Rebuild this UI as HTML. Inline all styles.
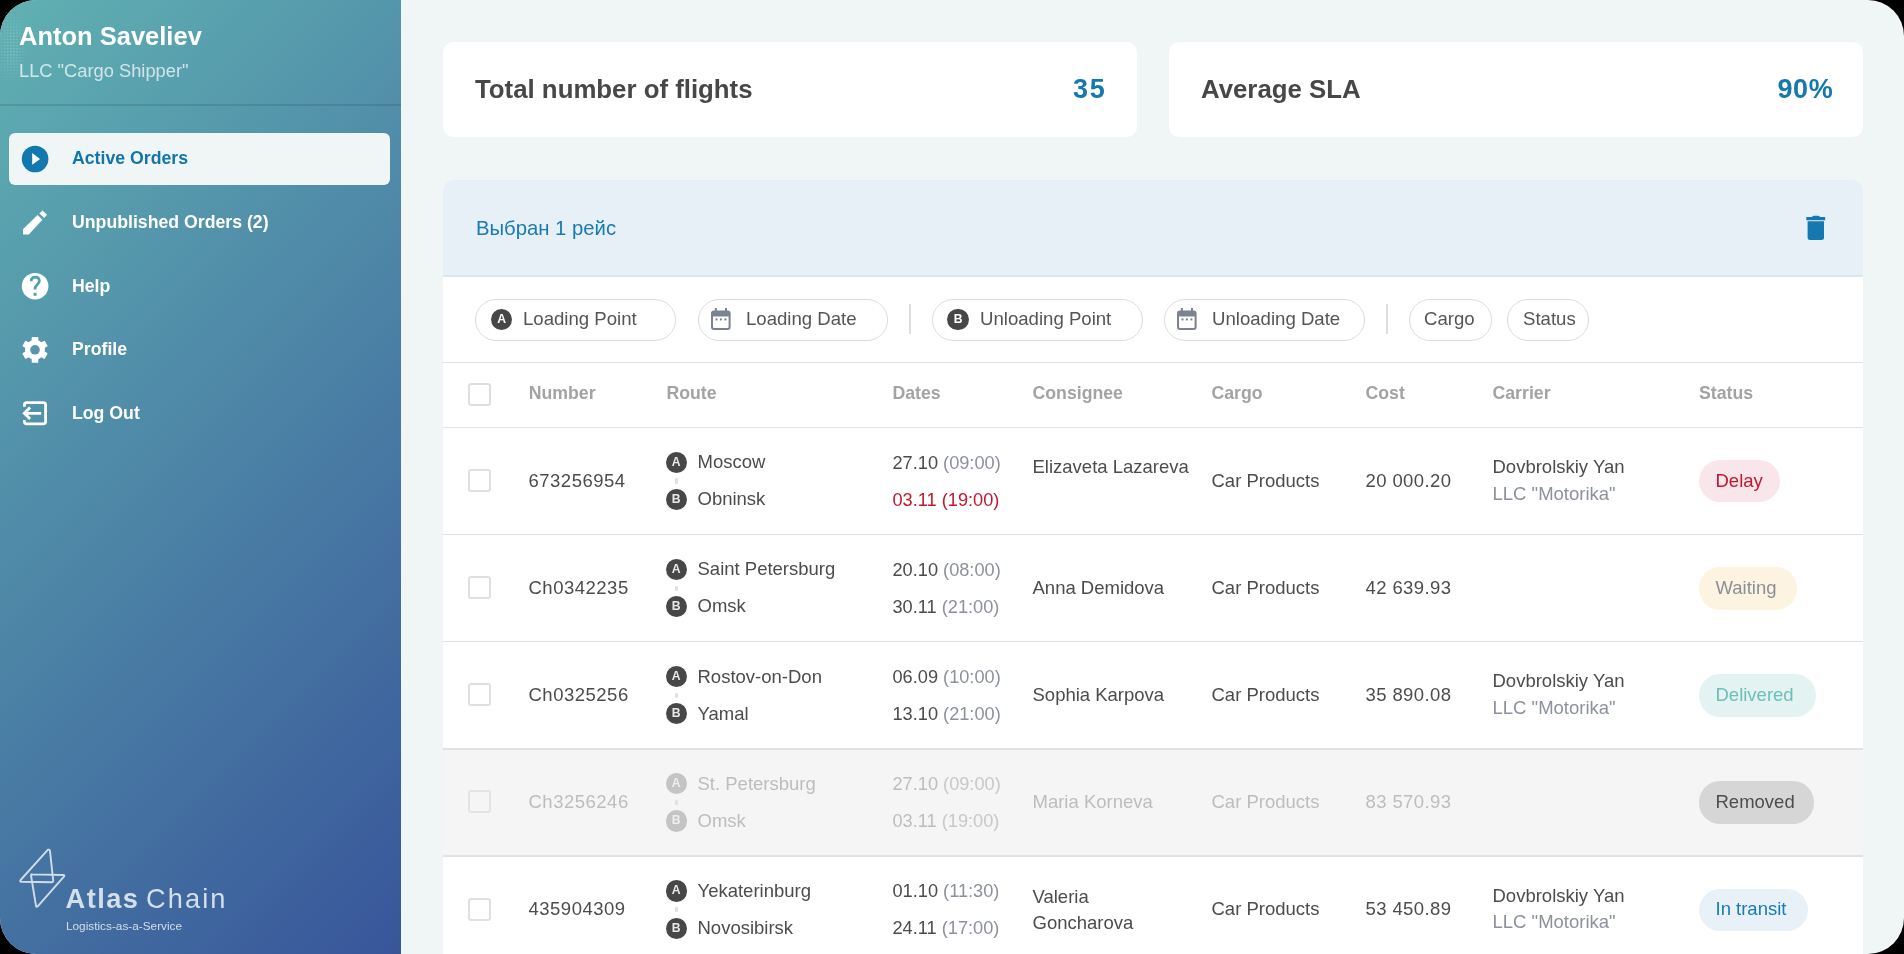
<!DOCTYPE html>
<html><head><meta charset="utf-8"><style>
*{box-sizing:border-box;margin:0;padding:0}
html,body{width:1904px;height:954px;overflow:hidden;background:#000;font-family:"Liberation Sans",sans-serif}
#frame{position:absolute;left:0;top:0;width:1904px;height:954px;border-radius:36px;overflow:hidden;background:#f0f5f5;will-change:transform}
.t{position:absolute;white-space:nowrap}
.r{position:absolute}
svg{position:absolute;overflow:visible}
</style></head><body><div id="frame">
<div class="r" style="left:0px;top:0px;width:401px;height:954px;background:linear-gradient(135deg,#60b1b2 0%,#38559a 100%)"></div>
<div class="r" style="left:0px;top:10px;width:40px;height:90px;background-image:radial-gradient(circle,rgba(170,225,220,0.40) 0.6px,transparent 1px);background-size:3.1px 3.1px;-webkit-mask-image:radial-gradient(ellipse 17px 40px at 11px 36px,#000 20%,transparent 100%);mask-image:radial-gradient(ellipse 17px 40px at 11px 36px,#000 20%,transparent 100%)"></div>
<div class="t" style="left:19.0px;top:24.1px;font-size:25.5px;line-height:25.5px;color:#fff;font-weight:700">Anton Saveliev</div>
<div class="t" style="left:19.0px;top:62.1px;font-size:18.3px;line-height:18.3px;color:rgba(255,255,255,0.72)">LLC "Cargo Shipper"</div>
<div class="r" style="left:0px;top:104.2px;width:401px;height:1.5px;background:rgba(30,60,75,0.17)"></div>
<div class="r" style="left:9px;top:133px;width:381px;height:52px;background:#f0f5f5;border-radius:6px"></div>
<div class="t" style="left:72.0px;top:149.9px;font-size:17.7px;line-height:17.7px;color:#1175ae;font-weight:700">Active Orders</div>
<div class="t" style="left:72.0px;top:214.0px;font-size:17.7px;line-height:17.7px;color:#fff;font-weight:700">Unpublished Orders (2)</div>
<div class="t" style="left:72.0px;top:277.6px;font-size:17.7px;line-height:17.7px;color:#fff;font-weight:700">Help</div>
<div class="t" style="left:72.0px;top:341.2px;font-size:17.7px;line-height:17.7px;color:#fff;font-weight:700">Profile</div>
<div class="t" style="left:72.0px;top:404.8px;font-size:17.7px;line-height:17.7px;color:#fff;font-weight:700">Log Out</div>
<svg style="left:0;top:0" width="401" height="954" viewBox="0 0 401 954"><circle cx="35.1" cy="159" r="13.3" fill="#1179b0"/><path d="M32.2 153.1 L40.1 158.9 L32.2 164.7 Z" fill="#fff"/><path d="M23 229.3 L37.5 215 L42.4 219.8 L28.8 234.6 L23 234.6 Z" fill="#fff"/><path d="M42.6 210.4 L47 214.8 L44.2 218 L39.4 213.4 Z" fill="#fff"/><circle cx="35.1" cy="286.2" r="13.3" fill="#fff"/><path d="M31.2 281.3 C31.2 278.6 33 277.2 35.3 277.2 C37.7 277.2 39.3 278.8 39.3 281 C39.3 283.6 36.3 284.6 35.1 287.8 L35.1 289.5" fill="none" stroke="#559fb0" stroke-width="2.8"/><rect x="33.6" y="292.8" width="3" height="3" fill="#559fb0"/><g transform="translate(35,349.8)"><mask id="gmask"><rect x="-20" y="-20" width="40" height="40" fill="#fff"/><circle r="4.8" fill="#000"/></mask><g mask="url(#gmask)" fill="#fff"><circle r="10.0"/><rect x="-3.3" y="-12.9" width="6.6" height="12.9" rx="0.8" transform="rotate(0)"/><rect x="-3.3" y="-12.9" width="6.6" height="12.9" rx="0.8" transform="rotate(60)"/><rect x="-3.3" y="-12.9" width="6.6" height="12.9" rx="0.8" transform="rotate(120)"/><rect x="-3.3" y="-12.9" width="6.6" height="12.9" rx="0.8" transform="rotate(180)"/><rect x="-3.3" y="-12.9" width="6.6" height="12.9" rx="0.8" transform="rotate(240)"/><rect x="-3.3" y="-12.9" width="6.6" height="12.9" rx="0.8" transform="rotate(300)"/></g></g><path d="M24.4 406.8 V405 Q24.4 402.7 26.7 402.7 H43.3 Q45.6 402.7 45.6 405 V421.6 Q45.6 423.9 43.3 423.9 H26.7 Q24.4 423.9 24.4 421.6 V420" fill="none" stroke="#fff" stroke-width="2.8" stroke-linejoin="round"/><path d="M41.2 413.3 H24.5 M30.1 407.5 L24.3 413.3 L30.1 419.1" fill="none" stroke="#fff" stroke-width="2.8"/></svg>
<div class="r" style="left:443px;top:42px;width:694px;height:95px;background:#fff;border-radius:10px"></div>
<div class="r" style="left:1169px;top:42px;width:694px;height:95px;background:#fff;border-radius:10px"></div>
<div class="t" style="left:475.0px;top:77.2px;font-size:25.8px;line-height:25.8px;color:#474747;font-weight:700">Total number of flights</div>
<div class="t" style="left:1073.0px;top:76.4px;font-size:27px;line-height:27px;color:#1479b0;font-weight:700;letter-spacing:1.8px">35</div>
<div class="t" style="left:1201.0px;top:77.2px;font-size:25.8px;line-height:25.8px;color:#474747;font-weight:700">Average SLA</div>
<div class="t" style="left:1777.5px;top:76.4px;font-size:27px;line-height:27px;color:#1479b0;font-weight:700;letter-spacing:0.6px">90%</div>
<div class="r" style="left:443px;top:180px;width:1420px;height:800px;background:#fff;border-radius:10px 10px 0 0"></div>
<div class="r" style="left:443px;top:180px;width:1420px;height:96px;background:#e8f0f7;border-radius:10px 10px 0 0"></div>
<div class="r" style="left:443px;top:275px;width:1420px;height:1.5px;background:#dfe5ea"></div>
<div class="t" style="left:476.0px;top:218.1px;font-size:20.3px;line-height:20.3px;color:#1a7ab2">Выбран 1 рейс</div>
<svg style="left:0;top:0" width="1904" height="954"><path d="M1812 217 Q1812.5 215.8 1814 215.8 H1818 Q1819.5 215.8 1820 217 H1825.2 V220.2 H1806.3 V217 Z" fill="#1479b0"/><path d="M1807.6 221.3 H1824 V237.5 Q1824 240 1821.5 240 H1810.1 Q1807.6 240 1807.6 237.5 Z" fill="#1479b0"/></svg>
<div class="r" style="left:475px;top:298.5px;width:201px;height:42px;border:1.5px solid #dcdcdc;border-radius:21px;background:#fff"></div>
<div class="r" style="left:698px;top:298.5px;width:190px;height:42px;border:1.5px solid #dcdcdc;border-radius:21px;background:#fff"></div>
<div class="r" style="left:932px;top:298.5px;width:211px;height:42px;border:1.5px solid #dcdcdc;border-radius:21px;background:#fff"></div>
<div class="r" style="left:1164px;top:298.5px;width:201px;height:42px;border:1.5px solid #dcdcdc;border-radius:21px;background:#fff"></div>
<div class="r" style="left:1409px;top:298.5px;width:83px;height:42px;border:1.5px solid #dcdcdc;border-radius:21px;background:#fff"></div>
<div class="r" style="left:1507px;top:298.5px;width:82px;height:42px;border:1.5px solid #dcdcdc;border-radius:21px;background:#fff"></div>
<div class="r" style="left:909px;top:304px;width:1.5px;height:30px;background:#dedede"></div>
<div class="r" style="left:1386px;top:304px;width:1.5px;height:30px;background:#dedede"></div>
<div class="r" style="left:490.9px;top:308.7px;width:21.3px;height:21.3px;border-radius:50%;background:#474747;color:#fff;font-size:12.2px;font-weight:700;text-align:center;line-height:21.900000000000002px">A</div>
<div class="r" style="left:947.4px;top:308.7px;width:21.3px;height:21.3px;border-radius:50%;background:#474747;color:#fff;font-size:12.2px;font-weight:700;text-align:center;line-height:21.900000000000002px">B</div>
<div class="t" style="left:523.0px;top:310.4px;font-size:18.6px;line-height:18.6px;color:#555">Loading Point</div>
<div class="t" style="left:746.0px;top:310.4px;font-size:18.6px;line-height:18.6px;color:#555">Loading Date</div>
<div class="t" style="left:980.0px;top:310.4px;font-size:18.6px;line-height:18.6px;color:#555">Unloading Point</div>
<div class="t" style="left:1212.0px;top:310.4px;font-size:18.6px;line-height:18.6px;color:#555">Unloading Date</div>
<div class="t" style="left:1424.0px;top:310.4px;font-size:18.6px;line-height:18.6px;color:#555">Cargo</div>
<div class="t" style="left:1523.0px;top:310.4px;font-size:18.6px;line-height:18.6px;color:#555">Status</div>
<svg style="left:711px;top:308px" width="20" height="23" viewBox="0 0 20 23"><rect x="1" y="3.5" width="17.6" height="17.6" rx="2" fill="none" stroke="#7b8290" stroke-width="2"/><rect x="0.5" y="3" width="18.6" height="5.5" rx="2" fill="#7b8290"/><rect x="3.8" y="0" width="2" height="4" fill="#7b8290"/><rect x="14" y="0" width="2" height="4" fill="#7b8290"/><rect x="4.5" y="10.4" width="2" height="2" fill="#7b8290"/><rect x="8.9" y="10.4" width="2" height="2" fill="#7b8290"/><rect x="13.4" y="10.4" width="2" height="2" fill="#7b8290"/></svg>
<svg style="left:1177px;top:308px" width="20" height="23" viewBox="0 0 20 23"><rect x="1" y="3.5" width="17.6" height="17.6" rx="2" fill="none" stroke="#7b8290" stroke-width="2"/><rect x="0.5" y="3" width="18.6" height="5.5" rx="2" fill="#7b8290"/><rect x="3.8" y="0" width="2" height="4" fill="#7b8290"/><rect x="14" y="0" width="2" height="4" fill="#7b8290"/><rect x="4.5" y="10.4" width="2" height="2" fill="#7b8290"/><rect x="8.9" y="10.4" width="2" height="2" fill="#7b8290"/><rect x="13.4" y="10.4" width="2" height="2" fill="#7b8290"/></svg>
<div class="r" style="left:443px;top:361.5px;width:1420px;height:1.5px;background:#e2e2e2"></div>
<div class="r" style="left:443px;top:426.5px;width:1420px;height:1.5px;background:#e2e2e2"></div>
<div class="r" style="left:468.4px;top:383px;width:23px;height:23px;border:2px solid #dedede;border-radius:3px;background:#fff"></div>
<div class="t" style="left:528.7px;top:384.8px;font-size:17.7px;line-height:17.7px;color:#a3a3a3;font-weight:700">Number</div>
<div class="t" style="left:666.4px;top:384.8px;font-size:17.7px;line-height:17.7px;color:#a3a3a3;font-weight:700">Route</div>
<div class="t" style="left:892.5px;top:384.8px;font-size:17.7px;line-height:17.7px;color:#a3a3a3;font-weight:700">Dates</div>
<div class="t" style="left:1032.5px;top:384.8px;font-size:17.7px;line-height:17.7px;color:#a3a3a3;font-weight:700">Consignee</div>
<div class="t" style="left:1211.5px;top:384.8px;font-size:17.7px;line-height:17.7px;color:#a3a3a3;font-weight:700">Cargo</div>
<div class="t" style="left:1365.5px;top:384.8px;font-size:17.7px;line-height:17.7px;color:#a3a3a3;font-weight:700">Cost</div>
<div class="t" style="left:1492.5px;top:384.8px;font-size:17.7px;line-height:17.7px;color:#a3a3a3;font-weight:700">Carrier</div>
<div class="t" style="left:1699.0px;top:384.8px;font-size:17.7px;line-height:17.7px;color:#a3a3a3;font-weight:700">Status</div>
<div class="r" style="left:468.4px;top:468.9px;width:23px;height:23px;border:2px solid #e0e0e0;border-radius:3px;background:#fff"></div>
<div class="t" style="left:528.5px;top:471.5px;font-size:18.5px;line-height:18.5px;color:#4c4c4c;letter-spacing:0.5px">673256954</div>
<div class="r" style="left:665.6px;top:451.8px;width:21.3px;height:21.3px;border-radius:50%;background:#474747;color:#e8e8e8;font-size:12.2px;font-weight:700;text-align:center;line-height:21.900000000000002px">A</div>
<div class="r" style="left:665.6px;top:488.9px;width:21.3px;height:21.3px;border-radius:50%;background:#474747;color:#e8e8e8;font-size:12.2px;font-weight:700;text-align:center;line-height:21.900000000000002px">B</div>
<div class="r" style="left:675px;top:478.3px;width:2.6px;height:5.5px;background:#e0e0e0;border-radius:1.3px"></div>
<div class="t" style="left:697.5px;top:453.2px;font-size:18.5px;line-height:18.5px;color:#4c4c4c">Moscow</div>
<div class="t" style="left:697.5px;top:490.2px;font-size:18.5px;line-height:18.5px;color:#4c4c4c">Obninsk</div>
<div class="t" style="left:892.5px;top:453.5px;font-size:18.2px;line-height:18.2px;color:#4c4c4c">27.10 <span style="color:#8c919c">(09:00)</span></div>
<div class="t" style="left:892.5px;top:490.5px;font-size:18.2px;line-height:18.2px;color:#c0182f">03.11 <span style="color:#c0182f">(19:00)</span></div>
<div class="t" style="left:1032.5px;top:458.1px;font-size:18.5px;line-height:18.5px;color:#4c4c4c">Elizaveta Lazareva</div>
<div class="t" style="left:1211.5px;top:471.5px;font-size:18.5px;line-height:18.5px;color:#4c4c4c">Car Products</div>
<div class="t" style="left:1365.5px;top:471.5px;font-size:18.5px;line-height:18.5px;color:#4c4c4c;letter-spacing:0.4px">20 000.20</div>
<div class="t" style="left:1492.5px;top:458.1px;font-size:18.5px;line-height:18.5px;color:#4c4c4c">Dovbrolskiy Yan</div>
<div class="t" style="left:1492.5px;top:484.7px;font-size:18.5px;line-height:18.5px;color:#8c919c">LLC "Motorika"</div>
<div class="r" style="left:1699px;top:459.9px;width:81px;height:42.5px;border-radius:21px;background:#f9e6ea"></div>
<div class="t" style="left:1715.5px;top:471.5px;font-size:18.5px;line-height:18.5px;color:#c0182f">Delay</div>
<div class="r" style="left:443px;top:533.7px;width:1420px;height:1.5px;background:#e2e2e2"></div>
<div class="r" style="left:468.4px;top:576.1px;width:23px;height:23px;border:2px solid #e0e0e0;border-radius:3px;background:#fff"></div>
<div class="t" style="left:528.5px;top:578.7px;font-size:18.5px;line-height:18.5px;color:#4c4c4c;letter-spacing:0.5px">Ch0342235</div>
<div class="r" style="left:665.6px;top:558.9px;width:21.3px;height:21.3px;border-radius:50%;background:#474747;color:#e8e8e8;font-size:12.2px;font-weight:700;text-align:center;line-height:21.900000000000002px">A</div>
<div class="r" style="left:665.6px;top:596.0px;width:21.3px;height:21.3px;border-radius:50%;background:#474747;color:#e8e8e8;font-size:12.2px;font-weight:700;text-align:center;line-height:21.900000000000002px">B</div>
<div class="r" style="left:675px;top:585.5px;width:2.6px;height:5.5px;background:#e0e0e0;border-radius:1.3px"></div>
<div class="t" style="left:697.5px;top:560.4px;font-size:18.5px;line-height:18.5px;color:#4c4c4c">Saint Petersburg</div>
<div class="t" style="left:697.5px;top:597.4px;font-size:18.5px;line-height:18.5px;color:#4c4c4c">Omsk</div>
<div class="t" style="left:892.5px;top:560.6px;font-size:18.2px;line-height:18.2px;color:#4c4c4c">20.10 <span style="color:#8c919c">(08:00)</span></div>
<div class="t" style="left:892.5px;top:597.6px;font-size:18.2px;line-height:18.2px;color:#4c4c4c">30.11 <span style="color:#8c919c">(21:00)</span></div>
<div class="t" style="left:1032.5px;top:578.7px;font-size:18.5px;line-height:18.5px;color:#4c4c4c">Anna Demidova</div>
<div class="t" style="left:1211.5px;top:578.7px;font-size:18.5px;line-height:18.5px;color:#4c4c4c">Car Products</div>
<div class="t" style="left:1365.5px;top:578.7px;font-size:18.5px;line-height:18.5px;color:#4c4c4c;letter-spacing:0.4px">42 639.93</div>
<div class="r" style="left:1699px;top:567.1px;width:98px;height:42.5px;border-radius:21px;background:#fcf4e0"></div>
<div class="t" style="left:1715.5px;top:578.7px;font-size:18.5px;line-height:18.5px;color:#8a8f9a">Waiting</div>
<div class="r" style="left:443px;top:640.9px;width:1420px;height:1.5px;background:#e2e2e2"></div>
<div class="r" style="left:468.4px;top:683.2px;width:23px;height:23px;border:2px solid #e0e0e0;border-radius:3px;background:#fff"></div>
<div class="t" style="left:528.5px;top:685.8px;font-size:18.5px;line-height:18.5px;color:#4c4c4c;letter-spacing:0.5px">Ch0325256</div>
<div class="r" style="left:665.6px;top:666.1px;width:21.3px;height:21.3px;border-radius:50%;background:#474747;color:#e8e8e8;font-size:12.2px;font-weight:700;text-align:center;line-height:21.900000000000002px">A</div>
<div class="r" style="left:665.6px;top:703.2px;width:21.3px;height:21.3px;border-radius:50%;background:#474747;color:#e8e8e8;font-size:12.2px;font-weight:700;text-align:center;line-height:21.900000000000002px">B</div>
<div class="r" style="left:675px;top:692.6px;width:2.6px;height:5.5px;background:#e0e0e0;border-radius:1.3px"></div>
<div class="t" style="left:697.5px;top:667.5px;font-size:18.5px;line-height:18.5px;color:#4c4c4c">Rostov-on-Don</div>
<div class="t" style="left:697.5px;top:704.5px;font-size:18.5px;line-height:18.5px;color:#4c4c4c">Yamal</div>
<div class="t" style="left:892.5px;top:667.8px;font-size:18.2px;line-height:18.2px;color:#4c4c4c">06.09 <span style="color:#8c919c">(10:00)</span></div>
<div class="t" style="left:892.5px;top:704.8px;font-size:18.2px;line-height:18.2px;color:#4c4c4c">13.10 <span style="color:#8c919c">(21:00)</span></div>
<div class="t" style="left:1032.5px;top:685.8px;font-size:18.5px;line-height:18.5px;color:#4c4c4c">Sophia Karpova</div>
<div class="t" style="left:1211.5px;top:685.8px;font-size:18.5px;line-height:18.5px;color:#4c4c4c">Car Products</div>
<div class="t" style="left:1365.5px;top:685.8px;font-size:18.5px;line-height:18.5px;color:#4c4c4c;letter-spacing:0.4px">35 890.08</div>
<div class="t" style="left:1492.5px;top:672.4px;font-size:18.5px;line-height:18.5px;color:#4c4c4c">Dovbrolskiy Yan</div>
<div class="t" style="left:1492.5px;top:699.0px;font-size:18.5px;line-height:18.5px;color:#8c919c">LLC "Motorika"</div>
<div class="r" style="left:1699px;top:674.2px;width:117px;height:42.5px;border-radius:21px;background:#e2f3f2"></div>
<div class="t" style="left:1715.5px;top:685.8px;font-size:18.5px;line-height:18.5px;color:#6dbdb8">Delivered</div>
<div class="r" style="left:443px;top:749.5px;width:1420px;height:105.7px;background:#f5f5f5"></div>
<div class="r" style="left:443px;top:748.0px;width:1420px;height:1.5px;background:#e2e2e2"></div>
<div class="r" style="left:468.4px;top:790.4px;width:23px;height:23px;border:2px solid #e3e3e3;border-radius:3px;background:#f5f5f5"></div>
<div class="t" style="left:528.5px;top:793.0px;font-size:18.5px;line-height:18.5px;color:#bdbdbd;letter-spacing:0.5px">Ch3256246</div>
<div class="r" style="left:665.6px;top:773.2px;width:21.3px;height:21.3px;border-radius:50%;background:#c4c4c4;color:#eee;font-size:12.2px;font-weight:700;text-align:center;line-height:21.900000000000002px">A</div>
<div class="r" style="left:665.6px;top:810.3px;width:21.3px;height:21.3px;border-radius:50%;background:#c4c4c4;color:#eee;font-size:12.2px;font-weight:700;text-align:center;line-height:21.900000000000002px">B</div>
<div class="r" style="left:675px;top:799.8px;width:2.6px;height:5.5px;background:#e0e0e0;border-radius:1.3px"></div>
<div class="t" style="left:697.5px;top:774.7px;font-size:18.5px;line-height:18.5px;color:#bdbdbd">St. Petersburg</div>
<div class="t" style="left:697.5px;top:811.7px;font-size:18.5px;line-height:18.5px;color:#bdbdbd">Omsk</div>
<div class="t" style="left:892.5px;top:774.9px;font-size:18.2px;line-height:18.2px;color:#bdbdbd">27.10 <span style="color:#c8c8c8">(09:00)</span></div>
<div class="t" style="left:892.5px;top:811.9px;font-size:18.2px;line-height:18.2px;color:#bdbdbd">03.11 <span style="color:#c8c8c8">(19:00)</span></div>
<div class="t" style="left:1032.5px;top:793.0px;font-size:18.5px;line-height:18.5px;color:#bdbdbd">Maria Korneva</div>
<div class="t" style="left:1211.5px;top:793.0px;font-size:18.5px;line-height:18.5px;color:#bdbdbd">Car Products</div>
<div class="t" style="left:1365.5px;top:793.0px;font-size:18.5px;line-height:18.5px;color:#bdbdbd;letter-spacing:0.4px">83 570.93</div>
<div class="r" style="left:1699px;top:781.4px;width:114.5px;height:42.5px;border-radius:21px;background:#d6d6d6"></div>
<div class="t" style="left:1715.5px;top:793.0px;font-size:18.5px;line-height:18.5px;color:#4d4d4d">Removed</div>
<div class="r" style="left:443px;top:855.2px;width:1420px;height:1.5px;background:#e2e2e2"></div>
<div class="r" style="left:468.4px;top:897.5px;width:23px;height:23px;border:2px solid #e0e0e0;border-radius:3px;background:#fff"></div>
<div class="t" style="left:528.5px;top:900.1px;font-size:18.5px;line-height:18.5px;color:#4c4c4c;letter-spacing:0.5px">435904309</div>
<div class="r" style="left:665.6px;top:880.4px;width:21.3px;height:21.3px;border-radius:50%;background:#474747;color:#e8e8e8;font-size:12.2px;font-weight:700;text-align:center;line-height:21.900000000000002px">A</div>
<div class="r" style="left:665.6px;top:917.5px;width:21.3px;height:21.3px;border-radius:50%;background:#474747;color:#e8e8e8;font-size:12.2px;font-weight:700;text-align:center;line-height:21.900000000000002px">B</div>
<div class="r" style="left:675px;top:906.9px;width:2.6px;height:5.5px;background:#e0e0e0;border-radius:1.3px"></div>
<div class="t" style="left:697.5px;top:881.8px;font-size:18.5px;line-height:18.5px;color:#4c4c4c">Yekaterinburg</div>
<div class="t" style="left:697.5px;top:918.8px;font-size:18.5px;line-height:18.5px;color:#4c4c4c">Novosibirsk</div>
<div class="t" style="left:892.5px;top:882.1px;font-size:18.2px;line-height:18.2px;color:#4c4c4c">01.10 <span style="color:#8c919c">(11:30)</span></div>
<div class="t" style="left:892.5px;top:919.1px;font-size:18.2px;line-height:18.2px;color:#4c4c4c">24.11 <span style="color:#8c919c">(17:00)</span></div>
<div class="t" style="left:1032.5px;top:888.0px;font-size:18.5px;line-height:18.5px;color:#4c4c4c">Valeria</div>
<div class="t" style="left:1032.5px;top:914.3px;font-size:18.5px;line-height:18.5px;color:#4c4c4c">Goncharova</div>
<div class="t" style="left:1211.5px;top:900.1px;font-size:18.5px;line-height:18.5px;color:#4c4c4c">Car Products</div>
<div class="t" style="left:1365.5px;top:900.1px;font-size:18.5px;line-height:18.5px;color:#4c4c4c;letter-spacing:0.4px">53 450.89</div>
<div class="t" style="left:1492.5px;top:886.7px;font-size:18.5px;line-height:18.5px;color:#4c4c4c">Dovbrolskiy Yan</div>
<div class="t" style="left:1492.5px;top:913.3px;font-size:18.5px;line-height:18.5px;color:#8c919c">LLC "Motorika"</div>
<div class="r" style="left:1699px;top:888.5px;width:109px;height:42.5px;border-radius:21px;background:#e8f1f8"></div>
<div class="t" style="left:1715.5px;top:900.1px;font-size:18.5px;line-height:18.5px;color:#1a7ab2">In transit</div>
<svg style="left:0;top:0" width="401" height="954"><path d="M48 849.7 Q49.6 849.2 50 851 L53.2 880.6 Q53.3 882.3 51.6 882.3 L21.4 881.7 Q19.4 881.6 20.6 880 Z" fill="none" stroke="#d0dde9" stroke-width="1.9" stroke-linejoin="round"/><path d="M31.1 874.4 L63.2 875 Q64.9 875.1 63.9 876.6 L37.7 906.3 Q36.3 907.6 36 905.8 L31.1 876 Q30.9 874.4 32.4 874.4 Z" fill="none" stroke="#d0dde9" stroke-width="1.9" stroke-linejoin="round"/></svg>
<div class="t" style="left:65.5px;top:884.8px;font-size:27.2px;line-height:27.2px;color:#d3dfeb;font-weight:700;letter-spacing:1.5px">Atlas</div>
<div class="t" style="left:146.0px;top:884.8px;font-size:27.2px;line-height:27.2px;color:#d3dfeb;letter-spacing:2.1px">Chain</div>
<div class="t" style="left:66.0px;top:921.0px;font-size:11.8px;line-height:11.8px;color:#d3dfeb">Logistics-as-a-Service</div>
</div></body></html>
